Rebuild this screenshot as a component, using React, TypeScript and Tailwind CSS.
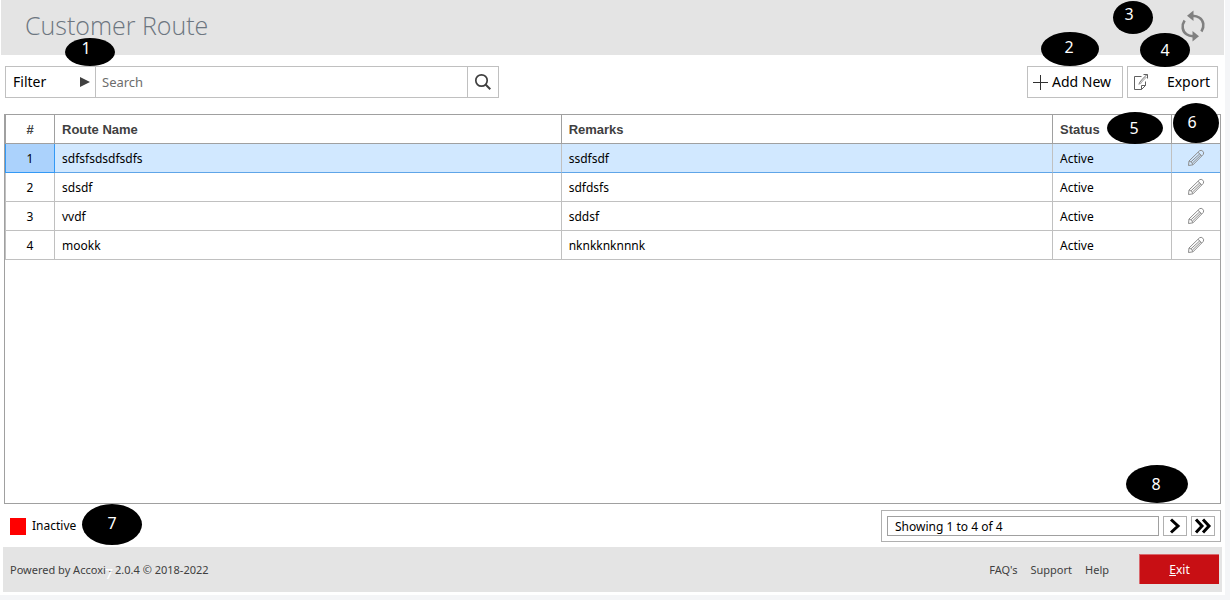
import { useState } from "react"
import type { ReactNode } from "react"

interface Route {
  id: number
  name: string
  remarks: string
  status: string
}

const ROUTES: Route[] = [
  { id: 1, name: "sdfsfsdsdfsdfs", remarks: "ssdfsdf", status: "Active" },
  { id: 2, name: "sdsdf", remarks: "sdfdsfs", status: "Active" },
  { id: 3, name: "vvdf", remarks: "sddsf", status: "Active" },
  { id: 4, name: "mookk", remarks: "nknkknknnnk", status: "Active" },
]

const FOOTER_LINKS = ["FAQ's", "Support", "Help"]

function Callout({ className, children }: { className: string; children: ReactNode }) {
  return (
    <span
      className={`absolute z-10 flex items-center justify-center rounded-[50%] bg-black text-base leading-none text-white ${className}`}
    >
      {children}
    </span>
  )
}

function RefreshIcon() {
  return (
    <svg width="26" height="32" viewBox="0 0 26 32" fill="none">
      <path d="M4.6 10.5C1.2 15.5 2.4 21.5 6.5 24.3C8.3 25.6 10.5 26.2 13 26.3" stroke="#808080" strokeWidth="2.6" />
      <path d="M12.5 5.7C15.5 5.8 17.7 6.4 19.5 7.7C23.6 10.5 24.8 16.5 21.4 21.5" stroke="#808080" strokeWidth="2.6" />
      <path d="M13.5 0.5V11L7 5.7Z" fill="#808080" />
      <path d="M12.5 21V31.5L19 26.3Z" fill="#808080" />
    </svg>
  )
}

function SearchIcon() {
  return (
    <svg width="18" height="18" viewBox="0 0 18 18" fill="none" stroke="#404040">
      <circle cx="7.5" cy="7.5" r="5.7" strokeWidth="1.7" />
      <path d="M11.5 11.5L16.3 16.3" strokeWidth="2" />
    </svg>
  )
}

function PlusIcon() {
  return (
    <svg width="15" height="15" viewBox="0 0 15 15" stroke="#303030">
      <path d="M7.5 0V15M0 7.5H15" />
    </svg>
  )
}

function ExportIcon() {
  return (
    <svg width="15" height="18" viewBox="0 0 15 18" fill="none" stroke="#606060">
      <path d="M7.5 3.5H0.5V16.5H7.5L11.5 12.5V8.5" />
      <path d="M7.5 16.5V12.5H11.5" />
      <path d="M5 11.5C5.5 9 7 7.5 13 1.5M9.5 1.5H13.5V5.5" />
      <path d="M6.5 11C7 9.5 8 8.5 12.5 4" strokeWidth="0.7" />
    </svg>
  )
}

function PencilIcon() {
  return (
    <svg width="18" height="18" viewBox="0 0 18 18" fill="none" stroke="#8c8c8c" strokeLinejoin="round">
      <path d="M1.5 16.5L2 12L12.5 1.8Q14.2 0.6 15.8 2.2Q17.4 3.8 16.2 5.5L6 15.8Z" />
      <path d="M2 12Q5 12.5 6 15.8M11 3.3L14.8 7M4 12.8L12.8 4.8M5.3 14.2L14 5.8" />
    </svg>
  )
}

function ChevronIcon({ double }: { double?: boolean }) {
  return double ? (
    <svg width="18" height="16" viewBox="0 0 18 16" fill="none" stroke="#000" strokeWidth="3">
      <path d="M2 1.5L8 8L2 14.5M9 1.5L15 8L9 14.5" />
    </svg>
  ) : (
    <svg width="12" height="16" viewBox="0 0 12 16" fill="none" stroke="#000" strokeWidth="3">
      <path d="M2 1.5L9 8L2 14.5" />
    </svg>
  )
}

export default function App() {
  const [query, setQuery] = useState("")
  const [selected, setSelected] = useState(1)

  const rows = ROUTES.filter((r) => r.name.includes(query) || r.remarks.includes(query))
  const th = "border-r border-b border-[#a0a0a0] px-[7px] pt-0.5 text-left font-bold"

  return (
    <div className="flex min-h-screen flex-col bg-[#f4f5f7] pr-[5px] pb-[5px] font-['Noto_Sans','Open_Sans',sans-serif] text-black">
      <div className="relative flex flex-1 flex-col bg-white pb-[3px]">
        <header className="relative mr-px ml-px flex h-[55px] shrink-0 items-center justify-between bg-[#e4e4e4] pr-[18px] pb-1 pl-6">
          <h1 className="font-['Open_Sans',sans-serif] text-[25px] font-light text-[#6d7680]">Customer Route</h1>
          <button aria-label="Refresh">
            <RefreshIcon />
          </button>
          <Callout className="top-[38px] left-16 h-7 w-[50px] pr-2 pb-2">1</Callout>
          <Callout className="top-8 right-[125px] h-[34px] w-[58px] pr-0.5 pb-1">2</Callout>
          <Callout className="top-px right-[71px] h-[33px] w-10 pr-2 pb-2">3</Callout>
          <Callout className="top-[33px] right-[34px] h-[34px] w-[50px]">4</Callout>
        </header>

        <div className="flex items-center justify-between pt-[11px] pr-[7px] pb-4 pl-[5px]">
          <div className="flex h-8 w-[494px] border border-[#c0c0c0]">
            <button className="flex w-[90px] items-center justify-between border-r border-[#c0c0c0] pr-[5px] pl-[7px] text-sm">
              Filter
              <svg width="10" height="10" viewBox="0 0 10 10" fill="#404040">
                <path d="M0 0L10 5L0 10Z" />
              </svg>
            </button>
            <input
              type="text"
              aria-label="Search"
              placeholder="Search"
              value={query}
              onChange={(e) => setQuery(e.target.value)}
              className="min-w-0 flex-1 px-1.5 pt-0.5 text-[13px] outline-none placeholder:text-[#6d6d6d]"
            />
            <button aria-label="Run search" className="flex w-[31px] items-center justify-center border-l border-[#c0c0c0]">
              <SearchIcon />
            </button>
          </div>
          <div className="flex gap-1">
            <button className="flex h-8 w-24 items-center gap-1 border border-[#c0c0c0] pl-[5px] text-sm whitespace-nowrap">
              <PlusIcon />
              Add New
            </button>
            <button className="flex h-8 w-[91px] items-center justify-between border border-[#c0c0c0] pr-[7px] pl-1.5 text-sm">
              <ExportIcon />
              Export
            </button>
          </div>
        </div>

        <div className="relative mr-1 ml-1 flex-1 border border-[#a0a0a0]">
          <table className="w-full table-fixed border-separate border-spacing-0 text-xs">
            <thead>
              <tr className="h-[29px] font-['Liberation_Sans',sans-serif] text-[13px] text-[#404040]">
                <th className="w-[50px] border-r border-b border-l border-[#a0a0a0] pt-0.5 text-center font-bold">#</th>
                <th className={`w-[41.7%] ${th}`}>Route Name</th>
                <th className={th}>Remarks</th>
                <th className={`w-[119px] ${th}`}>Status</th>
                <th className="w-12 border-b border-[#a0a0a0]" aria-label="Edit" />
              </tr>
            </thead>
            <tbody>
              {rows.map((r) => {
                const active = r.id === selected
                const cell = active
                  ? "border-r border-b border-r-[#c0c0c0] border-b-[#5fa5e8] bg-[#d1e8ff] px-[7px] pt-0.5"
                  : "border-r border-b border-[#c0c0c0] px-[7px] pt-0.5"
                return (
                  <tr key={r.id} className="h-[29px]" onClick={() => setSelected(r.id)}>
                    <td
                      className={
                        active
                          ? "border-r border-b border-l border-[#3399f5] bg-[#abd2fc] pt-0.5 text-center"
                          : "border-r border-b border-l border-[#c0c0c0] pt-0.5 text-center"
                      }
                    >
                      {r.id}
                    </td>
                    <td className={cell}>{r.name}</td>
                    <td className={cell}>{r.remarks}</td>
                    <td className={cell}>{r.status}</td>
                    <td
                      className={
                        active ? "border-b border-[#5fa5e8] bg-[#d1e8ff]" : "border-b border-[#c0c0c0]"
                      }
                    >
                      <button aria-label={`Edit ${r.name}`} className="mx-auto block">
                        <PencilIcon />
                      </button>
                    </td>
                  </tr>
                )
              })}
            </tbody>
          </table>
          <Callout className="-top-[3px] right-[57px] h-8 w-14 pr-0.5">5</Callout>
          <Callout className="-top-3 right-px h-10 w-[46px] pr-2 pb-0.5">6</Callout>
          <Callout className="right-8 bottom-0 h-[38px] w-[62px] pr-0.5">8</Callout>
        </div>

        <div className="relative flex items-center justify-between pt-1.5 pr-1 pb-[5px] pl-2.5 text-xs">
          <div className="flex items-center gap-1.5">
            <span className="h-[17px] w-4 bg-[#ff0000]" />
            Inactive
          </div>
          <Callout className="top-0 left-[82px] h-[41px] w-[60px] pb-1">7</Callout>
          <div className="flex h-8 w-[340px] gap-1 border border-[#b0b0b0] p-[5px]">
            <input
              readOnly
              aria-label="Page range"
              value={`Showing ${rows.length ? 1 : 0} to ${rows.length} of ${rows.length}`}
              className="min-w-0 flex-1 border border-[#a0a0a0] px-[7px] pt-0.5 outline-none"
            />
            <button aria-label="Next page" className="flex w-6 items-center justify-center border border-[#b0b0b0]">
              <ChevronIcon />
            </button>
            <button aria-label="Last page" className="flex w-6 items-center justify-center border border-[#b0b0b0]">
              <ChevronIcon double />
            </button>
          </div>
        </div>

        <footer className="relative mr-[3px] ml-[3px] flex h-[45px] shrink-0 items-start justify-between bg-[#e4e4e4] pt-[7px] pr-[3px] pl-[7px] text-[11px] leading-8 text-[#404040]">
          <span>Powered by Accoxi - 2.0.4 © 2018-2022</span>
          <span className="absolute top-5 left-[102px] text-sm leading-none text-white">7</span>
          <div className="flex items-start">
            <nav className="flex gap-[13px] pr-[30px]">
              {FOOTER_LINKS.map((l) => (
                <a key={l} href="#">
                  {l}
                </a>
              ))}
            </nav>
            <button className="h-[30px] w-20 border-t border-l border-[#d9686d] bg-[#c80f14] text-xs text-white">
              <span className="underline">E</span>xit
            </button>
          </div>
        </footer>
      </div>
    </div>
  )
}
